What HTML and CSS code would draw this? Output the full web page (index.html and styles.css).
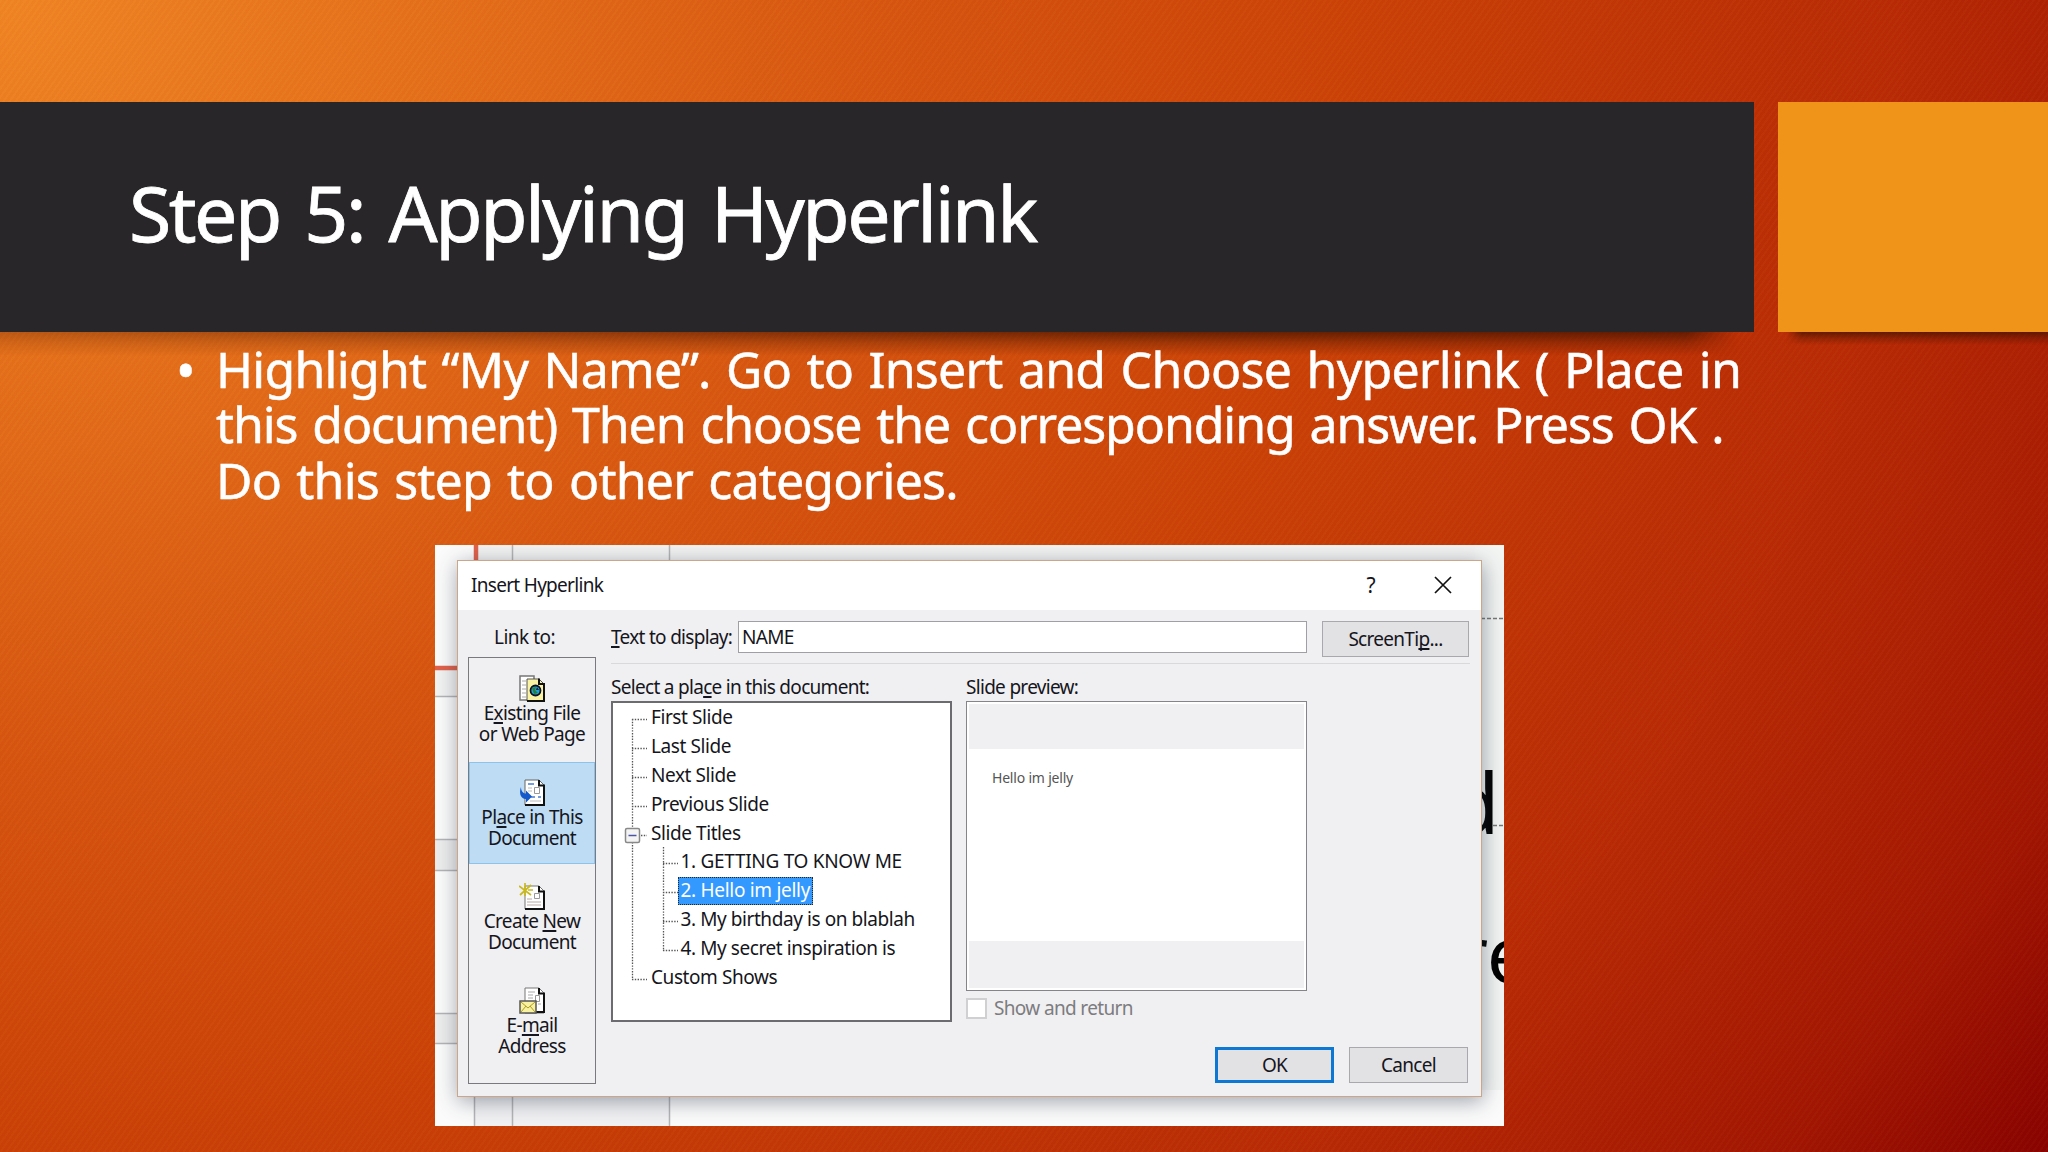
FILE: index.html
```html
<!DOCTYPE html>
<html lang="en">
<head>
<meta charset="utf-8">
<title>Step 5: Applying Hyperlink</title>
<link rel="stylesheet" href="styles.css">
</head>
<body>
<main class="slide">
  <header class="banner">
    <div class="banner-title"><h1>Step 5: Applying Hyperlink</h1></div>
    <div class="banner-accent"></div>
  </header>
  <ul class="points">
    <li><span class="line l1">Highlight “My Name”. Go to Insert and Choose hyperlink ( Place in</span><span class="line l2">this document) Then choose the corresponding answer. Press OK .</span><span class="line l3">Do this step to other categories.</span></li>
  </ul>
  <figure class="capture">
    <svg class="backdrop" viewBox="0 0 1069 581" width="1069" height="581">
      <rect width="1069" height="581" fill="#fbfbfb"/>
      <rect x="40" width="1029" height="20" fill="#f3f3f2"/>
      <rect x="0" y="294" width="30" height="31" fill="#ededed"/>
      <rect x="0" y="468" width="30" height="30" fill="#ededed"/>
      <rect x="0" y="124" width="30" height="27" fill="#f2f2f2"/>
      <rect x="40" y="545" width="195" height="36" fill="#f1f1f3"/>
      <rect x="1040" width="29" height="545" fill="#f3f5f3"/>
      <path d="M77.500 0V581M234.500 0V581M39.500 545V581M0 151.500H30M0 294.500H30M0 325.500H30M0 468.500H30M0 498.500H30" stroke="#b4b4b6" stroke-width="1.500"/>
      <path d="M41 0V24M0 123H30" stroke="#e0614a" stroke-width="4.500"/>
      <path d="M1046 73.500H1069M1046 280.500H1069" stroke="#777" stroke-width="1.500" stroke-dasharray="4 2"/>
      <text class="behind" x="1013" y="289">d</text>
      <text class="behind small" x="1021" y="438">re</text>
    </svg>
    <section class="dialog">
      <div class="titlebar">
        <span>Insert Hyperlink</span>
        <span class="help">?</span>
        <svg class="close" viewBox="0 0 18 18" width="18" height="18"><path d="M1 1 17 17M17 1 1 17" stroke="#111" stroke-width="1.700" fill="none"/></svg>
      </div>
      <div class="body">
        <div class="side">
          <div class="side-label">Link to:</div>
          <nav class="targets">
            <div class="target">
              <svg viewBox="0 0 26 27" width="26" height="27">
                <path d="M1 1H15V25H1Z" fill="#fff" stroke="#777" stroke-width="1.500"/>
                <path d="M3 6H7M3 10H7M3 14H7M3 18H7M3 22H7" stroke="#aaa"/>
                <path d="M8 4H20L25 9V26H8Z" fill="#fbf3a4" stroke="#555"/>
                <path d="M20 3.500V9H25V26H8" fill="none" stroke="#111" stroke-width="2"/>
                <circle cx="16.500" cy="15.500" r="5" fill="#1aa4d8" stroke="#112" stroke-width="1.800"/>
                <path d="M13 13 17 12 16 15 19 18 15 19Z" fill="#2d7d38"/><path d="M18 12 20 15 17 15Z" fill="#124"/>
              </svg>
              <span>E<u>x</u>isting File</span><span>or Web Page</span>
            </div>
            <div class="target selected">
              <svg viewBox="0 0 26 27" width="26" height="27">
                <path d="M6 1H20L25 6V26H6Z" fill="#fff" stroke="#666"/>
                <path d="M20 1V6.500H25V26H6" fill="none" stroke="#111" stroke-width="2"/>
                <path d="M9 5H15M19 18H22M16 18H12" stroke="#477bd4" stroke-width="1.500"/><path d="M9 9H13M9 12H13M11 22H22" stroke="#bbb"/>
                <path d="M15.500 8.500H20.500V14.500H15.500Z" fill="#fff" stroke="#999"/>
                <path d="M2 8C2 12 4 14.500 7 14.500V11.500L13 17.500 7 23.500V20C1 20 0 13 2 8Z" fill="#1458cc"/>
              </svg>
              <span>Pl<u>a</u>ce in This</span><span>Document</span>
            </div>
            <div class="target">
              <svg viewBox="0 0 26 27" width="26" height="27">
                <path d="M6 3H20L25 8V26H6Z" fill="#fff" stroke="#777"/>
                <path d="M20 3V8.500H25V26H6" fill="none" stroke="#111" stroke-width="2"/>
                <path d="M8 16H13M8 19H22M8 22H22" stroke="#b9aaa4"/><path d="M15.500 10.500H20.500V15.500H15.500Z" fill="#fff" stroke="#999"/>
                <path d="M6 0V13M0 3 12 12M12 2 1 12M9 7H14" stroke="#c9b91e" stroke-width="1.700"/>
              </svg>
              <span>Create <u>N</u>ew</span><span>Document</span>
            </div>
            <div class="target">
              <svg viewBox="0 0 26 27" width="26" height="27">
                <path d="M6 1H20L25 6V26H6Z" fill="#fff" stroke="#777"/>
                <path d="M20 1V6.500H25V25H16" fill="none" stroke="#111" stroke-width="2"/>
                <path d="M9 5H16M9 8H14M9 11H14M19 17H22" stroke="#aaa"/><path d="M16.500 8.500H20.500V14.500H16.500Z" fill="#fff" stroke="#999"/>
                <path d="M1 14H17V26H1Z" fill="#f8f2a0" stroke="#555" stroke-width="1.500"/>
                <path d="M2 15 9 21 16 15M2 25 7 19M16 25 11 19" stroke="#a99b25" fill="none"/>
              </svg>
              <span>E-<u>m</u>ail</span><span>Address</span>
            </div>
          </nav>
        </div>
        <div class="main">
          <div class="display-row">
            <label class="t-display"><u>T</u>ext to display:</label>
            <div class="field">NAME</div>
            <div class="button tip"><span>ScreenTi<u>p</u>...</span></div>
          </div>
          <div class="panels">
            <div class="place">
              <div class="caption">Select a pla<u>c</u>e in this document:</div>
              <div class="tree">
                <svg class="tree-lines" viewBox="0 0 337 317" width="337" height="317">
                  <path d="M19.500 16V277M50.500 144V248M19 16.500H34M19 45.500H34M19 74.500H34M19 103.500H34M28 132.500H34M50 160.500H65M50 189.500H65M50 218.500H65M50 247.500H65M19 276.500H34" stroke="#555" stroke-dasharray="1.400 1.400" stroke-width="1.300" fill="none"/>
                  <rect x="12.500" y="125.500" width="14" height="14" rx="1.500" fill="#f3f3f3" stroke="#888" stroke-width="1.500"/>
                  <path d="M15.500 132.500H23.500" stroke="#4a55a5" stroke-width="1.500"/>
                </svg>
                <ul class="nodes">
                  <li>First Slide</li>
                  <li>Last Slide</li>
                  <li>Next Slide</li>
                  <li>Previous Slide</li>
                  <li>Slide Titles</li>
                  <li class="child caps">1. GETTING TO KNOW ME</li>
                  <li class="child"><mark>2. Hello im jelly</mark></li>
                  <li class="child">3. My birthday is on blablah</li>
                  <li class="child">4. My secret inspiration is</li>
                  <li>Custom Shows</li>
                </ul>
              </div>
            </div>
            <div class="preview">
              <div class="caption">Slide preview:</div>
              <div class="preview-box"><div class="preview-slide">Hello im jelly</div></div>
              <div class="check"><i></i><span>Show and return</span></div>
            </div>
          </div>
          <div class="actions">
            <div class="button ok">OK</div>
            <div class="button">Cancel</div>
          </div>
        </div>
      </div>
    </section>
  </figure>
</main>
</body>
</html>
```
FILE: styles.css
```css
* { box-sizing: border-box; }
body { margin: 0; }
h1, ul, figure { margin: 0; padding: 0; }
ul { list-style: none; }
u { text-underline-offset: 2px; text-decoration-thickness: 1.5px; text-decoration-skip-ink: none; }

.slide {
  width: 2048px;
  height: 1152px;
  overflow: hidden;
  padding-top: 102px;
  font-family: "Noto Sans", sans-serif;
  color: #fff;
  background:
    repeating-linear-gradient(125deg, rgba(255, 225, 120, .022) 0 2px, rgba(120, 20, 0, .018) 2px 5px),
    radial-gradient(2496px 2080px at 0 0, #f08524 0, #e5701b 17%, #d6540f 37%, #cb4207 54%, #b82a05 76%, #a21602 90%, #850000 100%);
}

.banner {
  display: grid;
  grid-template-columns: 1754px 270px;
  gap: 24px;
  height: 230px;
}
.banner-title, .banner-accent { position: relative; }
.banner-title { background: #282629; padding: 58px 0 0 129px; }
.banner-accent { background: #f09319; }
.banner-title::after, .banner-accent::after {
  content: "";
  position: absolute;
  top: 100%;
  left: 0;
  right: 16px;
  height: 24px;
  background: linear-gradient(rgba(70, 20, 0, .75), rgba(70, 20, 0, .35) 45%, transparent);
  -webkit-mask-image: linear-gradient(90deg, rgba(0, 0, 0, .35), #000 70%, #000 97%, transparent);
  mask-image: linear-gradient(90deg, rgba(0, 0, 0, .35), #000 70%, #000 97%, transparent);
}
.banner-accent::after {
  left: 8px;
  right: 0;
  height: 13px;
  -webkit-mask-image: linear-gradient(90deg, transparent, #000 6%);
  mask-image: linear-gradient(90deg, transparent, #000 6%);
}
h1 {
  font-size: 77px;
  font-weight: 400;
  line-height: 105px;
  letter-spacing: -2.5px;
  word-spacing: 7px;
  white-space: nowrap;
  -webkit-text-stroke: .8px #fff;
}

.points { padding: 10px 0 0 216px; height: 213px; }
.points li { position: relative; font-size: 50px; line-height: 55.3px; -webkit-text-stroke: .5px #fff; }
.points li::before { content: "•"; position: absolute; left: -40px; font-size: 52px; }
.line { display: block; white-space: nowrap; }
.l1 { letter-spacing: -.75px; word-spacing: 3px; }
.l2 { letter-spacing: -1.1px; word-spacing: 3px; }
.l3 { letter-spacing: -.8px; word-spacing: 3px; }

.capture { display: grid; width: 1069px; height: 581px; margin-left: 435px; overflow: hidden; }
.backdrop, .dialog { grid-area: 1 / 1; }
.behind { font: 84px "Noto Sans", sans-serif; }
.behind.small { font-size: 78px; }

.dialog {
  width: 1025px;
  height: 537px;
  margin: 15px 0 0 22px;
  border: 1.5px solid #cda68a;
  background: #f0eff1;
  box-shadow: 1px 4px 20px rgba(40, 50, 70, .45);
  color: #151520;
  font: 19px/21px "Noto Sans", sans-serif;
  letter-spacing: -.7px;
  white-space: nowrap;
}
.titlebar { display: flex; align-items: center; height: 49px; padding: 0 29px 1px 13px; background: #fff; }
.help { margin-left: auto; margin-right: 59px; font-size: 21px; }
.close { display: block; }

.body { display: flex; gap: 15px; padding-left: 10px; }
.side { width: 128px; }
.side-label { height: 47px; padding: 17px 0 0 26px; letter-spacing: -.5px; }
.targets { height: 427px; border: 1.5px solid #7a7a7e; }
.target { display: flex; flex-direction: column; align-items: center; height: 104px; padding-top: 17px; letter-spacing: -.65px; }
.target svg { margin-bottom: 1px; }
.target span { line-height: 20.7px; }
.target.selected { height: 102px; margin-bottom: 2px; background: #bedcf3; border: 1px solid #8cc3ec; padding-top: 16px; }

.main { width: 859px; }
.display-row { display: flex; height: 54px; padding-top: 11px; border-bottom: 1.5px solid #d9d9db; }
.t-display { width: 127px; padding-top: 6px; }
.field { width: 569px; height: 32px; margin-right: 15px; padding: 5px 3px; border: 1.5px solid #a0a0a4; background: #fff; }
.button {
  display: flex;
  align-items: center;
  justify-content: center;
  width: 119px;
  height: 36px;
  border: 1.5px solid #a9a9ad;
  background: #e2e1e4;
}
.tip { width: 147px; }
.panels { display: flex; gap: 14px; padding-top: 13px; }
.caption { height: 24px; }
.tree { display: grid; width: 341px; height: 321px; border: 2px solid #6c6c70; background: #fff; letter-spacing: -.42px; }
.tree-lines, .nodes { grid-area: 1 / 1; }
.nodes li { height: 28.9px; line-height: 28px; padding-left: 38px; }
.nodes .child { padding-left: 67.5px; }
.nodes .caps { letter-spacing: -.3px; }
mark {
  display: inline-block;
  margin-left: -3px;
  padding: 0 2px;
  height: 28px;
  line-height: 25px;
  border: 1.5px dotted #2c2420;
  background: #3399ff;
  color: #fff;
  letter-spacing: -.3px;
}
.preview { width: 341px; }
.preview-box { height: 290px; padding: 2px; border: 1.5px solid #858589; background: #fff; }
.preview-slide {
  height: 284px;
  padding: 18px 0 0 23px;
  border-top: 45px solid #f0eff1;
  border-bottom: 47px solid #f0eff1;
  font-size: 14px;
  letter-spacing: -.2px;
  color: #555;
}
.check { display: flex; gap: 7px; padding-top: 7px; color: #7c7c80; letter-spacing: -.65px; }
.check i { width: 21px; height: 21px; border: 2px solid #d0d0d3; background: #fff; }
.actions { display: flex; justify-content: flex-end; gap: 15px; margin-top: 25px; padding-right: 2px; }
.ok { border: 3px solid #0c78d4; }
```
